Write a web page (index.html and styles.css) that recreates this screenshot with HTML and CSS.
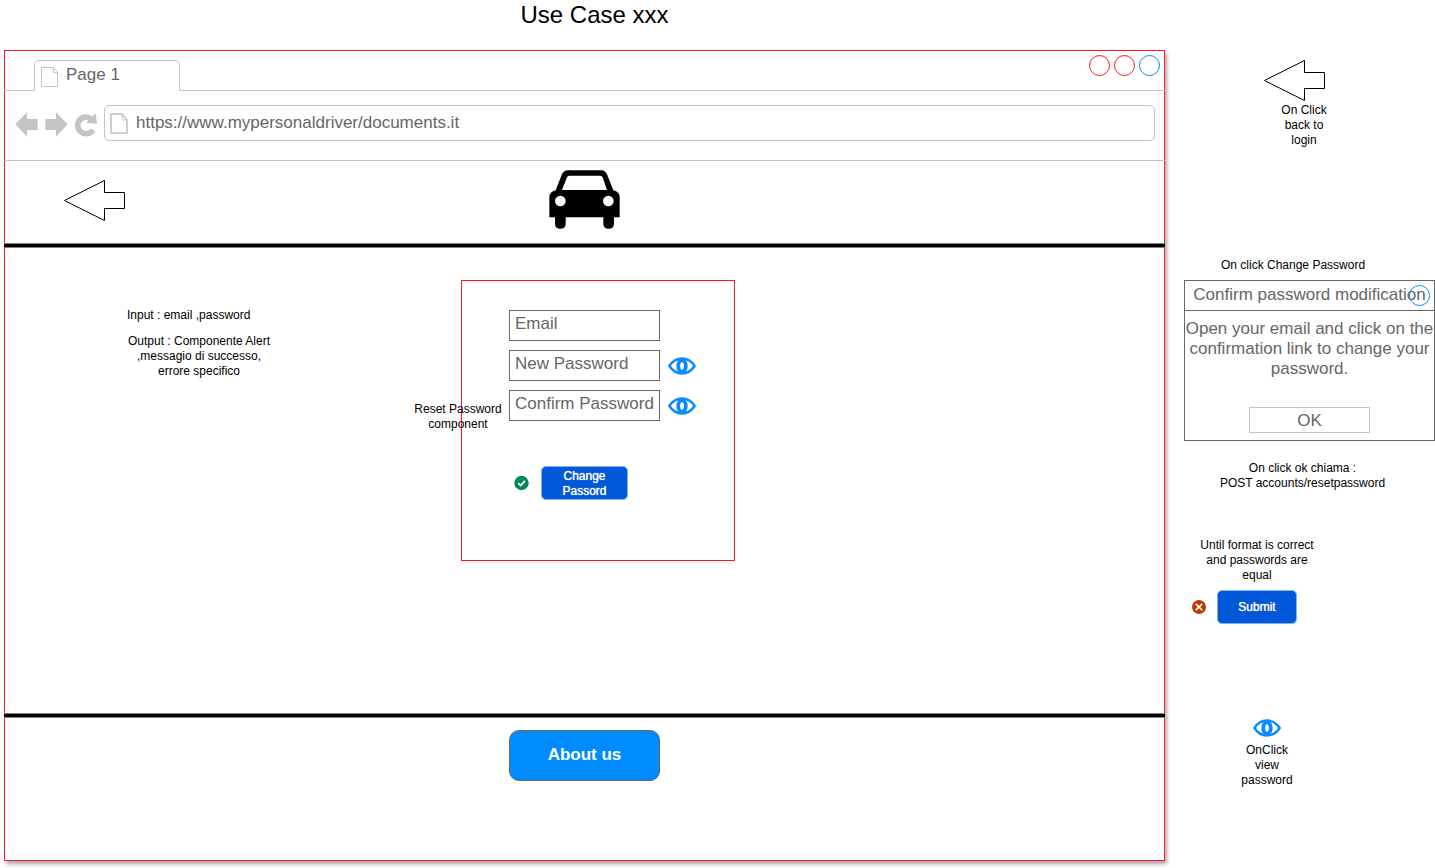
FILE: index.html
```html
<!DOCTYPE html>
<html lang="en">
<head>
<meta charset="utf-8">
<title>Use Case xxx</title>
<link rel="stylesheet" href="styles.css">
</head>
<body>
<svg class="defs" aria-hidden="true">
  <symbol id="eye" viewBox="0 0 81 51">
    <path d="M4 25.500Q18 4 40.500 4T77 25.500Q63 47 40.500 47T4 25.500Z" fill="#fff" stroke="#0a8aff" stroke-width="7"/>
    <ellipse cx="40.500" cy="25.500" rx="11" ry="16" fill="#fff" stroke="#0a8aff" stroke-width="11"/>
  </symbol>
  <symbol id="back" viewBox="0 0 61 41">
    <path d="M.5 20.500L40.500 .5V12.500H60.500V28.500H40.500V40.500Z" fill="#fff" stroke="#000"/>
  </symbol>
</svg>
<div class="page">
  <h1 class="title">Use Case xxx</h1>

  <div class="browser">
    <div class="tabs">
      <div class="tab">
        <svg width="17" height="20" viewBox="0 0 17 20" fill="none" stroke="#c4c4c4"><path d="M.5 .5H12.500L16.500 5.500V19.500H.5ZM12.500 .5V5.500H16.500"/></svg>
        <span>Page 1</span>
      </div>
      <div class="controls">
        <button class="dot dot-red" aria-label="Minimize"></button>
        <button class="dot dot-red" aria-label="Maximize"></button>
        <button class="dot dot-blue" aria-label="Close window"></button>
      </div>
    </div>
    <div class="toolbar">
      <button class="icon-button" aria-label="Back"><svg width="23" height="25" viewBox="0 0 69 75" fill="#c4c4c4"><path d="M1 37L36 1V21H68V54H36V74Z"/></svg></button>
      <button class="icon-button" aria-label="Forward"><svg width="23" height="25" viewBox="0 0 69 75" fill="#c4c4c4"><path d="M68 37L33 1V21H1V54H33V74Z"/></svg></button>
      <button class="icon-button" aria-label="Reload"><svg width="22" height="25" viewBox="0 0 66 75"><path d="M54 54A25 25 0 1 1 48 20" fill="none" stroke="#c4c4c4" stroke-width="17"/><path d="M62 4L66 36L33 32Z" fill="#c4c4c4"/></svg></button>
      <label class="address">
        <svg width="18" height="21" viewBox="0 0 18 21" fill="none" stroke="#cecece" stroke-width="2"><path d="M1 1H12L17 7V20H1Z"/><path d="M12 1V7H17" stroke-width="1"/></svg>
        <input class="address-input" type="text" aria-label="Address" value="https://www.mypersonaldriver/documents.it">
      </label>
    </div>

    <header class="site-header">
      <a class="back-link" href="#" aria-label="Back to login"><svg width="61" height="41"><use href="#back"/></svg></a>
      <svg width="71" height="59" viewBox="147 510 213 177" role="img" aria-label="Car">
        <path fill-rule="evenodd" d="M148 652V592Q148 575 167 571L185 525Q190 511 204 511H304Q317 511 322 525L340 571Q359 575 359 592V652H342V671Q342 686 326 686Q310 686 310 671V652H197V671Q197 686 181 686Q165 686 165 671V652ZM186 570H321L308 532Q306 527 300 527H208Q203 527 201 532ZM165 603A16 16 0 1 0 197 603A16 16 0 1 0 165 603M309 603A16 16 0 1 0 341 603A16 16 0 1 0 309 603"/>
      </svg>
    </header>
    <hr class="rule">

    <main class="content">
      <div class="notes">
        <p class="note note-left">Input : email ,password</p>
        <p class="note">Output : Componente Alert ,messagio di successo, errore specifico</p>
      </div>
      <form class="reset">
        <p class="note reset-label">Reset Password component</p>
        <div class="row"><input class="field" type="email" placeholder="Email" aria-label="Email"></div>
        <div class="row">
          <input class="field" type="password" placeholder="New Password" aria-label="New Password">
          <button class="icon-button" type="button" aria-label="View new password"><svg width="28" height="18"><use href="#eye"/></svg></button>
        </div>
        <div class="row">
          <input class="field" type="password" placeholder="Confirm Password" aria-label="Confirm Password">
          <button class="icon-button" type="button" aria-label="View confirmed password"><svg width="28" height="18"><use href="#eye"/></svg></button>
        </div>
        <div class="actions">
          <svg width="15" height="15" viewBox="0 0 15 15" role="img" aria-label="Valid"><circle cx="7.500" cy="7" r="7.200" fill="#00875a"/><path d="M4.200 7.200L6.700 9.500L11 4.800" fill="none" stroke="#fff" stroke-width="1.900"/></svg>
          <button class="primary primary-wide" type="button">Change Passord</button>
        </div>
      </form>
    </main>
    <hr class="rule">
    <footer class="site-footer"><button class="about">About us</button></footer>
  </div>

  <aside class="side">
    <svg class="side-arrow" width="61" height="41" aria-hidden="true"><use href="#back"/></svg>
    <p class="note back-note">On Click back to login</p>
    <p class="note change-note">On click Change Password</p>
    <section class="alert">
      <h2 class="alert-title">Confirm password modification</h2>
      <button class="dot dot-blue alert-close" aria-label="Close"></button>
      <div class="alert-body">
        <p class="alert-text">Open your email and click on the confirmation link to change your password.</p>
        <button class="ok">OK</button>
      </div>
    </section>
    <p class="note post-note">On click ok chiama :<br>POST accounts/resetpassword</p>
    <p class="note until-note">Until format is correct and passwords are equal</p>
    <div class="submit-row">
      <svg width="14" height="15" viewBox="0 0 14 15" role="img" aria-label="Invalid"><circle cx="7" cy="7" r="7" fill="#bf3600"/><path d="M3.800 3.800L10.200 10.200M10.200 3.800L3.800 10.200" stroke="#fff" stroke-width="1.700"/></svg>
      <button class="primary">Submit</button>
    </div>
    <svg class="side-eye" width="28" height="18" aria-hidden="true"><use href="#eye"/></svg>
    <p class="note view-note">OnClick view password</p>
  </aside>
</div>
</body>
</html>
```

FILE: styles.css
```css
* { box-sizing: border-box; }
body {
  margin: 0;
  background: #fff;
  font-family: "Liberation Sans", Arial, sans-serif;
  font-size: 17px;
  line-height: 20px;
  color: #666;
}
button, input { font: inherit; color: inherit; margin: 0; }
button { cursor: pointer; }
svg { display: block; flex: none; }
.defs { position: absolute; width: 0; height: 0; }

.page {
  display: grid;
  grid-template-columns: minmax(0, 1fr) 251px;
  column-gap: 19px;
  padding: 0 0 7px 4px;
}
.title {
  margin: 0;
  padding: 0 0 20px 20px;
  grid-row: 1;
  font-size: 24px;
  font-weight: 400;
  line-height: 30px;
  color: #000;
  text-align: center;
}

.browser {
  grid-row: 2;
  border: 1px solid #ff1522;
  background: #fff;
  box-shadow: 2px 3px 4px rgba(0, 0, 0, 0.35);
}
.tabs {
  display: flex;
  justify-content: space-between;
  margin: 0 -1px;
  padding: 4px 5px 0 30px;
  border-bottom: 1px solid #c4c4c4;
}
.tab {
  display: flex;
  gap: 8px;
  width: 146px;
  height: 31px;
  margin: 5px 0 -1px;
  padding: 6px;
  border: 1px solid #c4c4c4;
  border-bottom: 0;
  border-radius: 5px 5px 0 0;
  background: #fff;
  line-height: 15px;
}
.controls { display: flex; gap: 4px; }
.dot {
  width: 21px;
  height: 21px;
  padding: 0;
  border: 1px solid;
  border-radius: 50%;
  background: none;
}
.dot-red { border-color: #ff1522; }
.dot-blue { border-color: #008cff; }

.toolbar {
  display: flex;
  align-items: center;
  gap: 7px;
  margin: 0 -1px;
  padding: 14px 10px 19px 11px;
  border-bottom: 1px solid #c4c4c4;
}
.icon-button { padding: 0; border: 0; background: none; }
.toolbar .icon-button { padding-top: 2px; }
.address {
  flex: 1;
  display: flex;
  align-items: center;
  gap: 8px;
  height: 36px;
  padding: 0 5px;
  border: 1px solid #c4c4c4;
  border-radius: 5px;
}
.address-input {
  flex: 1;
  min-width: 0;
  padding: 0;
  border: 0;
  background: none;
}

.site-header {
  display: grid;
  grid-template-columns: 1fr auto 1fr;
  align-items: center;
  padding: 9px 0 14px;
}
.back-link { justify-self: start; margin: 2px 0 0 59px; }
.rule {
  height: 5px;
  margin: 0 -1px;
  border: solid #808080;
  border-width: 1px 0;
  background: #000;
}

.content {
  display: grid;
  grid-template-columns: 1fr 274px 1fr;
  align-items: start;
  padding: 32px 0 152px 27px;
}
.note {
  margin: 0;
  font-size: 12px;
  line-height: 15px;
  text-align: center;
  color: #000;
}
.notes {
  display: grid;
  gap: 11px;
  width: 144px;
  margin-left: 95px;
  padding-top: 28px;
}
.note-left { text-align: left; }
.reset {
  position: relative;
  display: grid;
  gap: 9px;
  padding: 29px 0 60px 47px;
  border: 1px solid #ff1522;
}
.reset-label {
  position: absolute;
  top: 121px;
  left: -48px;
  width: 88px;
}
.row { display: flex; align-items: center; gap: 8px; }
.field {
  width: 151px;
  height: 31px;
  padding: 0 0 4px 5px;
  border: 1px solid #666;
  background: #fff;
}
.field::placeholder { color: #666; opacity: 1; }
.actions {
  display: flex;
  align-items: center;
  gap: 12px;
  padding: 36px 0 0 5px;
}
.primary {
  width: 80px;
  height: 34px;
  padding: 1px 12px 0;
  border: 1px solid #7fb0f2;
  border-radius: 5px;
  background: #0057d8;
  color: #fff;
  font-size: 12px;
  line-height: 15px;
  text-shadow: 0 0 1px #fff;
}
.primary-wide { width: 87px; }
.site-footer {
  display: flex;
  justify-content: center;
  padding: 12px 0 79px;
}
.about {
  width: 151px;
  height: 51px;
  padding: 0 0 2px;
  border: 1px solid #666;
  border-radius: 10px;
  background: #008cff;
  color: #fff;
  font-weight: 700;
}

.side { grid-row: 2; grid-column: 2; padding-top: 10px; }
.side-arrow { margin-left: 80px; }
.back-note { width: 48px; margin: 2px 0 0 96px; }
.change-note { margin: 110px 0 0 37px; text-align: left; }
.alert {
  position: relative;
  margin-top: 7px;
  border: 1px solid #666;
  text-align: center;
}
.alert-title {
  margin: 0;
  padding: 4px 0 5px;
  border-bottom: 1px solid #666;
  font-size: 17px;
  font-weight: 400;
}
.alert-close { position: absolute; top: 4px; right: 4px; }
.alert-body { padding: 8px 0 7px; }
.alert-text { margin: 0 0 28px; }
.ok {
  width: 121px;
  height: 26px;
  padding: 1px 0 0;
  border: 1px solid #c4c4c4;
  background: #fff;
}
.post-note { width: 167px; margin: 20px 0 0 35px; }
.until-note { width: 120px; margin: 47px 0 0 13px; }
.submit-row {
  display: flex;
  align-items: center;
  gap: 11px;
  margin: 7px 0 0 8px;
}
.side-eye { margin: 95px 0 0 69px; }
.view-note { width: 56px; margin: 6px 0 0 55px; }
```
